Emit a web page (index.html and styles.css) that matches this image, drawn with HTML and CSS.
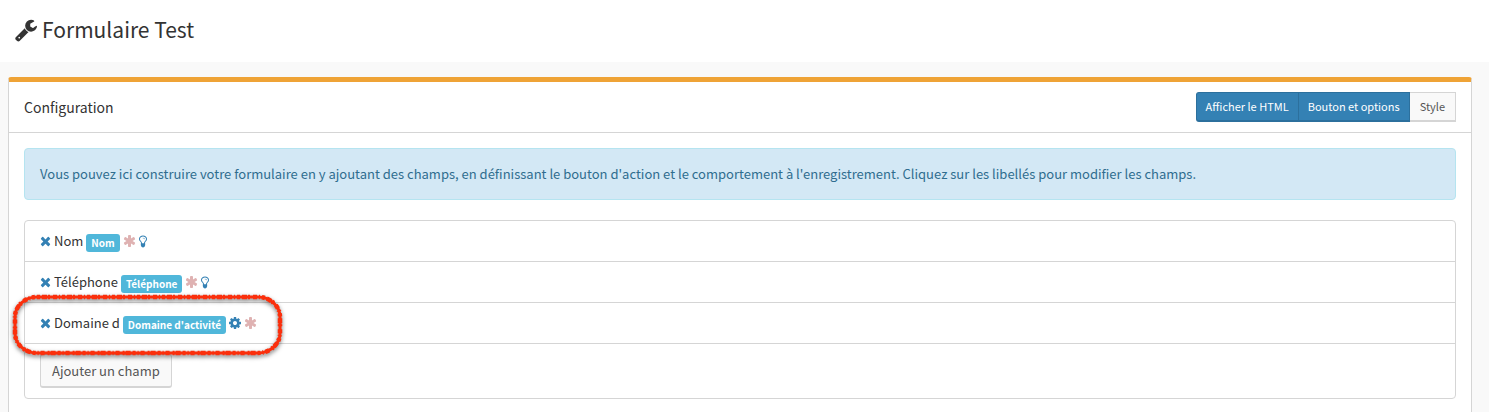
FILE: index.html
```html
<!DOCTYPE html>
<html lang="fr">
<head>
<meta charset="utf-8">
<title>Formulaire Test</title>
<link rel="stylesheet" href="styles.css">
</head>
<body>
<svg class="symbols" aria-hidden="true">
  <symbol id="wrench" viewBox="64 0 1664 1792"><path d="M448 1472q0-26-19-45t-45-19-45 19-19 45 19 45 45 19 45-19 19-45zm644-420l-682 682q-37 37-90 37-52 0-91-37l-106-108q-38-36-38-90 0-53 38-91l681-681q39 98 114.500 173.500t173.500 114.500zm634-435q0 39-23 106-47 134-164.500 217.500t-258.500 83.500q-185 0-316.500-131.500t-131.500-316.500 131.500-316.500 316.500-131.500q58 0 121.500 16.500t107.500 46.500q16 11 16 28t-16 28l-293 169v224l193 107q5-3 79-48.500t135.500-81 70.500-35.500q15 0 23.500 10t8.500 25z"/></symbol>
  <symbol id="times" viewBox="192 0 1408 1792"><path d="M1490 1322q0 40-28 68l-136 136q-28 28-68 28t-68-28l-294-294-294 294q-28 28-68 28t-68-28l-136-136q-28-28-28-68t28-68l294-294-294-294q-28-28-28-68t28-68l136-136q28-28 68-28t68 28l294 294 294-294q28-28 68-28t68 28l136 136q28 28 28 68t-28 68l-294 294 294 294q28 28 28 68z"/></symbol>
  <symbol id="asterisk" viewBox="64 0 1664 1792"><path d="M1546 1050q46 26 59.500 77.500t-12.500 97.500l-64 110q-26 46-77.500 59.500t-97.500-12.500l-266-153v307q0 52-38 90t-90 38h-128q-52 0-90-38t-38-90v-307l-266 153q-46 26-97.500 12.500t-77.500-59.500l-64-110q-26-46-12.500-97.500t59.500-77.500l266-154-266-154q-46-26-59.500-77.500t12.500-97.500l64-110q26-46 77.500-59.500t97.500 12.500l266 153v-307q0-52 38-90t90-38h128q52 0 90 38t38 90v307l266-153q46-26 97.500-12.500t77.500 59.500l64 110q26 46 12.500 97.500t-59.500 77.500l-266 154z"/></symbol>
  <symbol id="bulb" viewBox="384 0 1024 1792"><path d="M1120 640q0 13-9.500 22.500t-22.500 9.500-22.500-9.500-9.500-22.500q0-46-54-71t-106-25q-13 0-22.500-9.500t-9.500-22.500 9.500-22.500 22.500-9.500q50 0 99.500 16t87 54 37.500 90zm160 0q0-72-34.500-134t-90-101.500-123-62-136.500-22.500-136.500 22.500-123 62-90 101.500-34.500 134q0 101 68 180 10 11 30.500 33t30.500 33q128 153 141 298h228q13-145 141-298 10-11 30.500-33t30.500-33q68-79 68-180zm128 0q0 155-103 268-45 49-74.500 87t-59.500 95.500-34 107.500q47 28 47 82 0 37-25 64 25 27 25 64 0 52-45 81 13 23 13 47 0 46-31.500 71t-77.500 25q-20 44-60 70t-87 26-87-26-60-70q-46 0-77.500-25t-31.500-71q0-24 13-47-45-29-45-81 0-37 25-64-25-27-25-64 0-54 47-82-4-50-34-107.500t-59.500-95.500-74.500-87q-103-113-103-268 0-99 44.500-184.500t117-142 164-89 186.500-32.500 186.500 32.500 164 89 117 142 44.500 184.500z"/></symbol>
  <symbol id="cog" viewBox="128 0 1536 1792"><path d="M1152 896q0-106-75-181t-181-75-181 75-75 181 75 181 181 75 181-75 75-181zm512-109v222q0 12-8 23t-20 13l-185 28q-19 54-39 91 35 50 107 138 10 12 10 25t-9 23q-27 37-99 108t-94 71q-12 0-26-9l-138-108q-44 23-91 38-16 136-29 186-7 28-36 28h-222q-14 0-24.500-8.500t-11.500-21.500l-28-184q-49-16-90-37l-141 107q-10 9-25 9-14 0-25-11-126-114-165-168-7-10-7-23 0-12 8-23 15-21 51-66.500t54-70.500q-27-50-41-99l-183-27q-13-2-21-12.500t-8-23.500v-222q0-12 8-23t19-13l186-28q14-46 39-92-40-57-107-138-10-12-10-24 0-10 9-23 26-36 98.500-107.500t94.500-71.500q13 0 26 10l138 107q44-23 91-38 16-136 29-186 7-28 36-28h222q14 0 24.500 8.500t11.500 21.500l28 184q49 16 90 37l142-107q9-9 24-9 13 0 25 10 129 119 165 170 7 8 7 22 0 12-8 23-15 21-51 66.500t-54 70.500q26 50 41 98l183 28q13 2 21 12.500t8 23.500z"/></symbol>
</svg>

<header class="page-header">
  <svg class="title-icon" aria-hidden="true"><use href="#wrench"/></svg>
  <h1>Formulaire Test</h1>
</header>

<main class="panel">
  <div class="panel-head">
    <h2>Configuration</h2>
    <div class="btn-group">
      <button type="button" class="btn-sm primary">Afficher le HTML</button>
      <button type="button" class="btn-sm primary">Bouton et options</button>
      <button type="button" class="btn-sm">Style</button>
    </div>
  </div>
  <div class="panel-body">
    <p class="alert">Vous pouvez ici construire votre formulaire en y ajoutant des champs, en définissant le bouton d'action et le comportement à l'enregistrement. Cliquez sur les libellés pour modifier les champs.</p>
    <ul class="fields">
      <li>
        <button type="button" class="icon-btn" aria-label="Supprimer"><svg class="w11"><use href="#times"/></svg></button>
        <span class="name">Nom</span>
        <span class="tag">Nom</span>
        <button type="button" class="icon-btn required" aria-label="Obligatoire"><svg class="w13"><use href="#asterisk"/></svg></button>
        <button type="button" class="icon-btn" aria-label="Aide"><svg class="w8"><use href="#bulb"/></svg></button>
      </li>
      <li>
        <button type="button" class="icon-btn" aria-label="Supprimer"><svg class="w11"><use href="#times"/></svg></button>
        <span class="name">Téléphone</span>
        <span class="tag">Téléphone</span>
        <button type="button" class="icon-btn required" aria-label="Obligatoire"><svg class="w13"><use href="#asterisk"/></svg></button>
        <button type="button" class="icon-btn" aria-label="Aide"><svg class="w8"><use href="#bulb"/></svg></button>
      </li>
      <li>
        <button type="button" class="icon-btn" aria-label="Supprimer"><svg class="w11"><use href="#times"/></svg></button>
        <span class="name">Domaine d</span>
        <span class="tag">Domaine d'activité</span>
        <button type="button" class="icon-btn" aria-label="Options"><svg class="w12"><use href="#cog"/></svg></button>
        <button type="button" class="icon-btn required" aria-label="Obligatoire"><svg class="w13"><use href="#asterisk"/></svg></button>
        <svg class="ring" viewBox="0 0 284 76" aria-hidden="true">
          <rect x="9" y="9" width="265" height="56" rx="22" ry="20" stroke-width="3"/>
          <rect x="9" y="9" width="265" height="56" rx="22" ry="20" stroke-width="4.500" stroke-dasharray="3 2 5 1 2 3 4 2 1 2"/>
        </svg>
      </li>
      <li><button type="button" class="btn">Ajouter un champ</button></li>
    </ul>
  </div>
</main>
</body>
</html>
```

FILE: styles.css
```css
* { box-sizing: border-box; }

body {
  margin: 0;
  background: #f9f9f9;
  color: #333;
  font: 13px/20px "Noto Sans CJK SC", "Noto Sans", sans-serif;
}

h1, h2, p, ul { margin: 0; padding: 0; font-weight: 400; }
ul { list-style: none; }
button { font: inherit; cursor: pointer; }
svg { fill: currentColor; }
.symbols { display: none; }

.page-header {
  display: flex;
  align-items: center;
  gap: 5px;
  height: 62px;
  padding: 0 15px 2px;
  background: #fff;
}
.page-header h1 { padding-bottom: 3px; font-size: 21px; line-height: 30px; }
.title-icon { width: 22px; height: 24px; }

.panel {
  margin: 15px 17px 0 8px;
  background: #fff;
  border: 1px solid #d5d5d5;
  border-top: 5px solid #efa336;
  border-radius: 3px 3px 0 0;
}
.panel-head {
  display: flex;
  align-items: center;
  justify-content: space-between;
  padding: 10px 15px;
  border-bottom: 1px solid #d5d5d5;
}
.panel-head h2 { font-size: 14px; line-height: 20px; }

.btn-group { display: flex; }
.btn-sm {
  height: 30px;
  padding: 0 9px 2px;
  font-size: 11px;
  line-height: 18px;
  color: #555;
  background: #f9f9f9;
  border: 1px solid #d5d5d5;
  border-bottom-width: 2px;
  border-left: 0;
}
.btn-sm.primary {
  color: #fff;
  background: #3481b4;
  border-color: #2c709d;
}
.btn-sm:first-child { border-left: 1px solid #2c709d; border-radius: 3px 0 0 3px; }
.btn-sm:last-child { padding: 0 10px 2px; }

.panel-body { padding: 15px; }
.alert {
  margin-bottom: 20px;
  padding: 15px;
  color: #2f6d8f;
  background: #d3e8f5;
  border: 1px solid #b5e4f0;
  border-radius: 4px;
}

.fields { border: 1px solid #d5d5d5; border-radius: 4px; }
.fields li {
  position: relative;
  display: flex;
  align-items: center;
  gap: 3px;
  padding: 10px 15px;
}
.fields li + li { border-top: 1px solid #d5d5d5; }
.icon-btn {
  display: flex;
  padding: 0;
  color: #3481b4;
  background: none;
  border: 0;
}
.icon-btn svg { height: 14px; }
.required { color: #dfb2b2; }
.w8 { width: 8px; }
.w11 { width: 11px; }
.w12 { width: 12px; }
.w13 { width: 13px; }
.tag {
  height: 18px;
  margin: 3px 0 -1px;
  padding: 0 5px;
  color: #fff;
  background: #50b7da;
  border-radius: 3px;
  font-size: 10px;
  font-weight: 700;
  line-height: 17px;
}
.btn {
  height: 34px;
  padding: 0 11px;
  color: #555;
  background: #f9f9f9;
  border: 1px solid #d5d5d5;
  border-bottom-width: 2px;
  border-radius: 3px;
}
.ring {
  position: absolute;
  z-index: 1;
  top: -15px;
  left: -19px;
  width: 284px;
  height: 76px;
  fill: none;
  stroke: #fb2f0c;
  filter: drop-shadow(0 2px 2px rgba(0, 0, 0, 0.5));
  pointer-events: none;
}
```
